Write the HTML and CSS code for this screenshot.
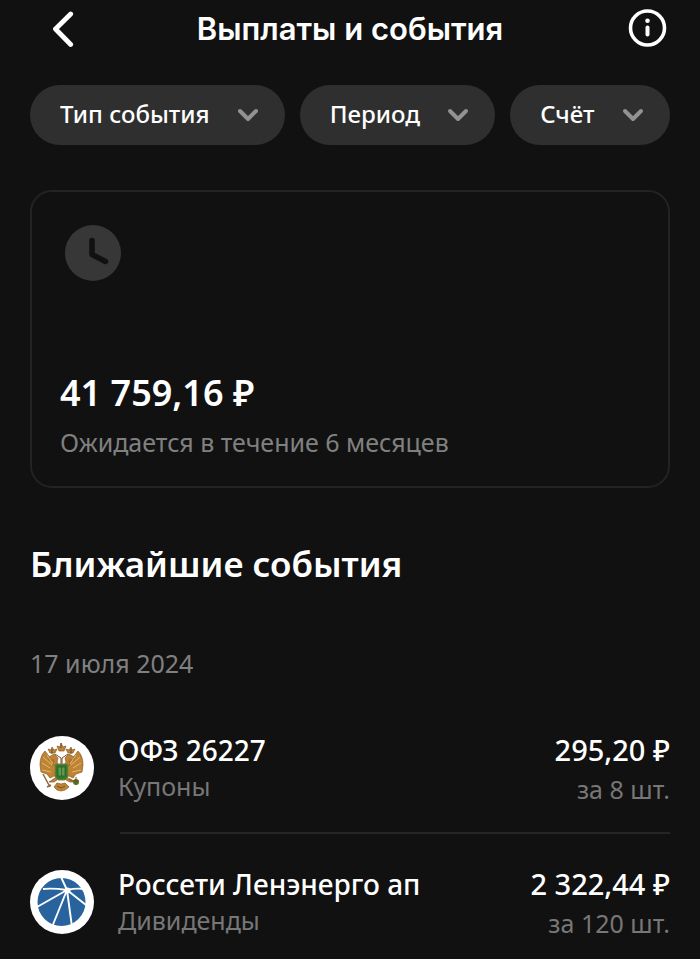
FILE: index.html
```html
<!DOCTYPE html>
<html lang="ru">
<head>
<meta charset="utf-8">
<meta name="viewport" content="width=device-width, initial-scale=1">
<title>Выплаты и события</title>
<link rel="stylesheet" href="styles.css">
</head>
<body>
<header class="topbar">
  <button class="icon-button" type="button" aria-label="Назад">
    <svg width="44" height="44" viewBox="0 0 44 44" fill="none" stroke="currentColor" stroke-width="4.800" stroke-linecap="round" stroke-linejoin="round"><path d="M40.700 7 25.500 22 40.700 37.500"/></svg>
  </button>
  <h1 class="topbar-title">Выплаты и события</h1>
  <button class="icon-button" type="button" aria-label="Информация">
    <svg width="44" height="44" viewBox="0 0 44 44" fill="none" stroke="currentColor"><circle cx="21.500" cy="21" r="17" stroke-width="3.600"/><path d="M21.500 20.500v7" stroke-width="4" stroke-linecap="round"/><circle cx="21.500" cy="13.800" r="2.300" fill="currentColor" stroke="none"/></svg>
  </button>
</header>

<main class="content">
  <form class="filters">
    <div class="chip">
      <select class="chip-select" aria-label="Тип события"><option>Тип события</option></select>
      <svg class="chip-arrow" width="22" height="16" viewBox="0 0 22 16"><path d="m3 4 8 8 8-8"/></svg>
    </div>
    <div class="chip">
      <select class="chip-select" aria-label="Период"><option>Период</option></select>
      <svg class="chip-arrow" width="22" height="16" viewBox="0 0 22 16"><path d="m3 4 8 8 8-8"/></svg>
    </div>
    <div class="chip">
      <select class="chip-select" aria-label="Счёт"><option>Счёт</option></select>
      <svg class="chip-arrow" width="22" height="16" viewBox="0 0 22 16"><path d="m3 4 8 8 8-8"/></svg>
    </div>
  </form>

  <section class="summary">
    <svg class="clock" width="56" height="56" viewBox="0 0 56 56" fill="none"><circle cx="28" cy="28" r="28" fill="#373737"/><path d="M27 15.500V29.500L40.500 36.500" stroke="#111" stroke-width="5.500" stroke-linecap="round" stroke-linejoin="round"/></svg>
    <p class="total">41 759,16 ₽</p>
    <p class="note">Ожидается в течение 6 месяцев</p>
  </section>

  <section>
    <h2 class="heading">Ближайшие события</h2>
    <h3 class="date">17 июля 2024</h3>
    <ul class="events">
      <li class="event">
        <svg class="logo" width="64" height="64" viewBox="0 0 64 64">
          <circle cx="32" cy="32" r="32" fill="#fff"/>
          <g fill="#bd8435" stroke="#8f5926" stroke-width=".7" stroke-linejoin="round">
            <path d="M26 27 21 23 15 15Q10 20 10 29L11 36 17 38 20 42 28 38Z"/>
            <path d="M37 27 42 23 48 15Q53 20 53 29L52 36 46 38 43 42 35 38Z"/>
            <path d="M30 31 27 26 28 22 24 18 19 21 19 24 24 24 23 28 28 34Z"/>
            <path d="M33 31 36 26 35 22 39 18 44 21 44 24 39 24 40 28 35 34Z"/>
            <path d="M25 42 19 46 24 46 27 44ZM38 42 45 46 40 46 36 44Z"/>
            <path d="m24 51 3-4 4 1 4-1 4 4-4 3-4 1-4-1Z"/>
            <path d="M20 17 18 13 21 14 22 11 24 14 27 13 25 17ZM43 17 45 13 42 14 41 11 39 14 36 13 38 17Z"/>
            <path d="m29 15-2-5 3 1 1-4 2 4 3-1-2 5Z"/>
          </g>
          <path d="M12 27 20 32M12 34 21 36M13 21 22 29M51 27 43 32M51 34 42 36M50 21 41 29M17 19 23 28M46 19 40 28" stroke="#e3b765" stroke-width="1" fill="none"/>
          <path d="M25 18 31 22V29M38 18 32 22V29M27 50 31 52 35 50" stroke="#7b4b25" fill="none"/>
          <path d="M25 28H38V41L35 44H28L25 41Z" fill="#277d31" stroke="#a3762c"/>
          <path d="M28 31h7v9h-7ZM31.500 31v9" fill="#62984a" stroke="#315b29" stroke-width=".8"/>
          <path d="M13 38 20 51M17 51 21 49M39 43 47 47" stroke="#8d6930" stroke-width="1.500"/>
          <circle cx="46" cy="46" r="3" fill="#557526"/><path d="M46 41v8M43 45h6M31 7v5M22 13v5M41 13v5" stroke="#755020" stroke-width="1"/>
        </svg>
        <div class="details"><h4 class="name">ОФЗ 26227</h4><p class="kind">Купоны</p></div>
        <div class="amounts"><p class="sum">295,20 ₽</p><p class="count">за 8 шт.</p></div>
      </li>
      <li class="event">
        <svg class="logo" width="64" height="64" viewBox="0 0 64 64">
          <circle cx="32" cy="32" r="32" fill="#fff"/>
          <circle cx="31.500" cy="32" r="24" fill="#28639e"/>
          <g stroke="#fff" stroke-width="1.900" fill="none"><path d="M37 20 31 7M37 20Q23 18 13 19M37 20 7 37M37 20 22 57M37 20 42 57M37 20 56 35M37 20Q46 18 54 19"/></g>
          <circle cx="37.500" cy="20.500" r="3" fill="#fff"/>
        </svg>
        <div class="details"><h4 class="name">Россети Ленэнерго ап</h4><p class="kind">Дивиденды</p></div>
        <div class="amounts"><p class="sum">2 322,44 ₽</p><p class="count">за 120 шт.</p></div>
      </li>
    </ul>
  </section>
</main>
</body>
</html>
```
FILE: styles.css
```css
* {
  box-sizing: border-box;
}

body,
h1, h2, h3, h4, p, ul {
  margin: 0;
  padding: 0;
}

body {
  background: #111;
  color: #fff;
  font-family: "Noto Sans", "Open Sans", sans-serif;
  font-size: 25px;
  line-height: 32px;
}

svg {
  display: block;
}

.topbar {
  display: flex;
  align-items: center;
  justify-content: space-between;
  padding: 7px 30px 0;
}

.icon-button {
  padding: 0;
  border: 0;
  background: none;
  color: #fff;
}

.topbar-title {
  font-family: Inter, sans-serif;
  font-size: 31px;
  font-weight: 600;
  line-height: 44px;
}

.content {
  padding: 34px 30px 0;
}

.filters {
  display: flex;
  gap: 15px;
}

.chip {
  position: relative;
  flex: 1 1 auto;
}

.chip-select {
  width: 100%;
  height: 60px;
  padding: 0 74px 4px 30px;
  border: 0;
  border-radius: 30px;
  appearance: none;
  background: #2f2f2f;
  color: #fff;
  font: 500 24px "Noto Sans", sans-serif;
}

.chip-arrow {
  position: absolute;
  top: 22px;
  right: 26px;
  fill: none;
  stroke: #929292;
  stroke-width: 4;
  stroke-linecap: round;
  stroke-linejoin: round;
  pointer-events: none;
}

.summary {
  margin-top: 45px;
  padding: 33px 28px 28px;
  border: 2px solid #232323;
  border-radius: 22px;
}

.clock {
  margin-left: 5px;
}

.total {
  margin-top: 88px;
  font-size: 36px;
  font-weight: 600;
  line-height: 48px;
}

.note {
  margin-top: 9px;
  color: #808080;
}

.heading {
  margin-top: 52px;
  font-size: 35px;
  font-weight: 600;
  line-height: 48px;
}

.date {
  margin-top: 59px;
  color: #808080;
  font-size: 25px;
  font-weight: 400;
}

.events {
  margin-top: 21px;
  list-style: none;
}

.event {
  display: grid;
  grid-template-columns: 64px 1fr auto;
  column-gap: 24px;
  align-items: start;
  padding: 36px 0 29px;
}

.event:not(:last-child) {
  background: linear-gradient(#262626, #262626) 90px 100% / 100% 2px no-repeat;
}

.event:last-child {
  padding-bottom: 0;
}

.name,
.sum {
  font-size: 28px;
  font-weight: 500;
  line-height: 32px;
}

.sum {
  font-size: 29px;
}

.kind {
  margin-top: 4px;
}

.details,
.amounts {
  margin-top: -2px;
}

.kind,
.count {
  color: #777;
}

.count {
  margin-top: 7px;
}

.amounts {
  text-align: right;
}
```
